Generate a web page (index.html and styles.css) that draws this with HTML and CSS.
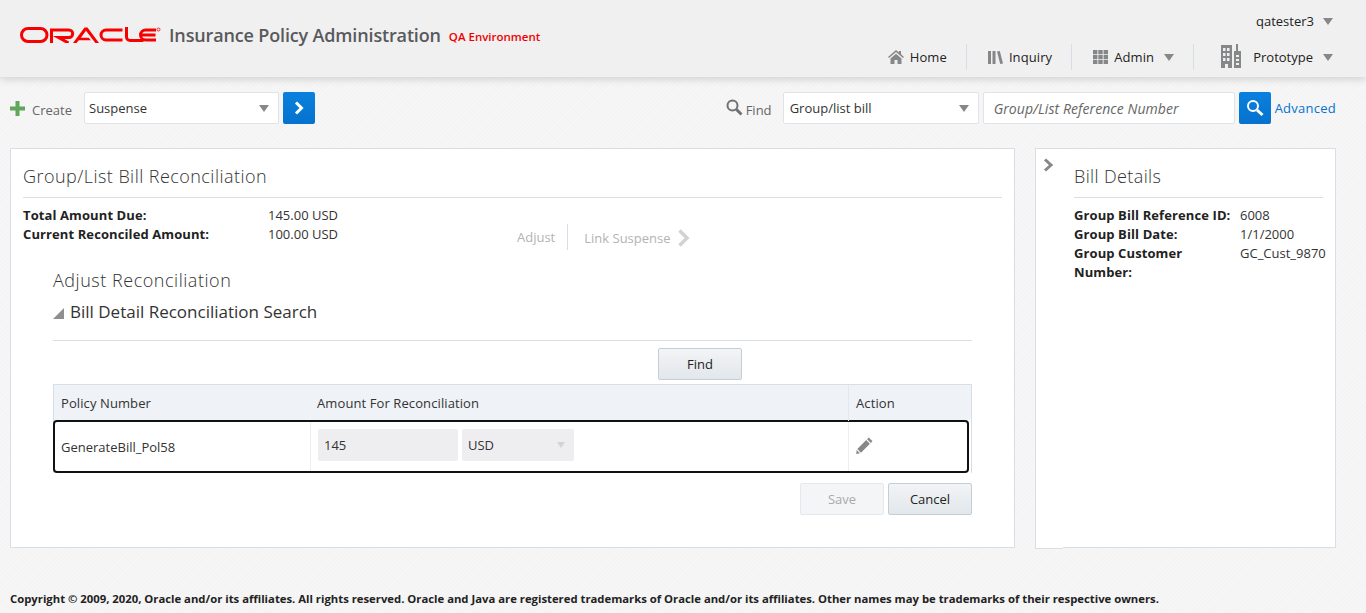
FILE: index.html
```html
<!DOCTYPE html>
<html lang="en">
<head>
<meta charset="utf-8">
<title>Insurance Policy Administration</title>
<link rel="stylesheet" href="styles.css">
</head>
<body>
<header class="topbar">
  <div class="brand">
    <svg class="logo" width="141" height="16" viewBox="0 0 141 16" aria-hidden="true">
      <g fill="none" stroke="#f80000" stroke-width="3">
        <rect x="1.500" y="1.500" width="25.500" height="13" rx="6.500"/>
        <path d="M31.500 16V3h17.500a3.700 3.700 0 0 1 0 7.400H38.500l10 5.600"/>
        <path d="M102.500 3H86a5 5 0 0 0 0 10h16.500"/>
        <path d="M106.500 0v10a3.500 3.500 0 0 0 3.500 3.500h13.500"/>
        <path d="M136 3h-10.500a5 5 0 0 0 0 10H136M121.500 8h14"/>
      </g>
      <path d="M53 16 64.500.5h3L79 16h-3.600L66 3.700 60.800 10.700h8l2 2.600H58.800L56.500 16z" fill="#f80000"/>
      <circle cx="138.500" cy="2.500" r="1.500" fill="none" stroke="#f80000" stroke-width=".8"/>
    </svg>
    <span class="product">Insurance Policy Administration</span>
    <span class="env">QA Environment</span>
  </div>
  <div class="top-right">
    <div class="user">qatester3 <i class="caret user-caret"></i></div>
    <nav class="nav">
      <a class="nav-item">
        <svg width="16" height="14" viewBox="0 0 16 14" aria-hidden="true"><path fill="#858789" d="M8 0 0 7l1 1 7-6 7 6 1-1-3-2.700V1h-2v1.500zM2.500 8.500V14h4v-4h3v4h4V8.500L8 3.700z"/></svg>
        Home
      </a>
      <a class="nav-item">
        <svg width="15" height="13" viewBox="0 0 15 13" aria-hidden="true"><path fill="#858789" d="M0 0h3v13H0zM4.500 0h3v13h-3zM9 .5l2.800-.5L15 12.500l-2.800.5z"/></svg>
        Inquiry
      </a>
      <a class="nav-item">
        <svg width="15" height="14" viewBox="0 0 15 14" aria-hidden="true"><path fill="#858789" d="M0 0h4.400v4.200H0zM5.300 0h4.400v4.200H5.300zM10.600 0H15v4.200h-4.400zM0 4.900h4.400v4.200H0zM5.300 4.900h4.400v4.200H5.300zM10.600 4.900H15v4.200h-4.400zM0 9.800h4.400V14H0zM5.300 9.800h4.400V14H5.300zM10.600 9.800H15V14h-4.400z"/></svg>
        Admin <i class="caret nav-caret"></i>
      </a>
      <a class="nav-item proto">
        <svg width="20" height="24" viewBox="0 0 20 24" aria-hidden="true"><path fill="#858789" fill-rule="evenodd" d="M0 1h11v23H7v-4H4v4H0zM2 4v3h2.500V4zM6 4v3h2.500V4zM2 9v3h2.500V9zM6 9v3h2.500V9zM2 14v3h2.500v-3zM6 14v3h2.500v-3zM13 7h2V0h2v7h3v17h-7zM15 11v2h3v-2zM15 15v2h3v-2zM15 19v2h3v-2z"/></svg>
        <span class="proto-label">Prototype</span> <i class="caret nav-caret"></i>
      </a>
    </nav>
  </div>
</header>

<section class="toolbar">
  <div class="tool-group">
    <svg class="plus" width="15" height="15" viewBox="0 0 15 15" aria-hidden="true"><path fill="#5fa85a" d="M5.500 0h4v5.500H15v4H9.500V15h-4V9.500H0v-4h5.500z"/></svg>
    <span class="tool-label create-label">Create</span>
    <div class="select create-select"><span>Suspense</span><i class="caret"></i></div>
    <button class="go" aria-label="Go">
      <svg width="12" height="14" viewBox="0 0 12 14" aria-hidden="true"><path d="M3 1.500 8.500 7 3 12.500" fill="none" stroke="#fff" stroke-width="3"/></svg>
    </button>
  </div>
  <div class="tool-group">
    <svg class="lens" width="17" height="17" viewBox="0 0 17 17" aria-hidden="true"><circle cx="6.500" cy="6.500" r="5" fill="none" stroke="#6f7173" stroke-width="2"/><path d="m10.500 10.500 5 5" stroke="#6f7173" stroke-width="3"/></svg>
    <span class="tool-label find-label">Find</span>
    <div class="select find-select"><span>Group/list bill</span><i class="caret"></i></div>
    <div class="search-input">Group/List Reference Number</div>
    <button class="go" aria-label="Search">
      <svg width="18" height="18" viewBox="0 0 18 18" aria-hidden="true"><circle cx="7" cy="7" r="5" fill="none" stroke="#fff" stroke-width="2"/><path d="m11 11 5.500 5" stroke="#fff" stroke-width="3"/></svg>
    </button>
    <a class="advanced">Advanced</a>
  </div>
</section>

<main class="content">
  <section class="panel main-panel">
    <h1 class="panel-title">Group/List Bill Reconciliation</h1>
    <div class="summary-row">
      <dl class="summary">
        <dt>Total Amount Due:</dt><dd>145.00 USD</dd>
        <dt>Current Reconciled Amount:</dt><dd>100.00 USD</dd>
      </dl>
      <div class="train">
        <span class="train-step">Adjust</span>
        <span class="train-step link-step">Link Suspense
          <svg width="13" height="18" viewBox="0 0 13 18" aria-hidden="true"><path d="M2.500 1.500 10 9l-7.500 7.500" fill="none" stroke="#d2d2d2" stroke-width="3.500"/></svg>
        </span>
      </div>
    </div>
    <div class="adjust">
      <h2 class="adjust-title">Adjust Reconciliation</h2>
      <h3 class="disclosure"><i class="tri"></i>Bill Detail Reconciliation Search</h3>
      <div class="find-row"><button class="btn">Find</button></div>
      <div class="grid">
        <div class="grid-head">
          <div class="c1">Policy Number</div>
          <div class="c2">Amount For Reconciliation</div>
          <div class="c3">Action</div>
        </div>
        <div class="grid-row">
          <div class="c1 policy">GenerateBill_Pol58</div>
          <div class="c2 cell-inputs">
            <div class="ro amount">145</div>
            <div class="ro currency">USD<i class="caret faint"></i></div>
          </div>
          <div class="c3">
            <svg width="17" height="17" viewBox="0 0 17 17" aria-hidden="true"><path fill="#858789" d="M12.800.5 16.500 4.200 14.800 5.900 11.100 2.200zM10.200 3.100 13.900 6.800 5 15.700 1.300 12zM.7 13l3.300 3.300-3.800.6z"/></svg>
          </div>
        </div>
      </div>
      <div class="actions">
        <button class="btn disabled">Save</button>
        <button class="btn">Cancel</button>
      </div>
    </div>
  </section>
  <aside class="panel side-panel">
    <svg class="collapse" width="12" height="16" viewBox="0 0 12 16" aria-hidden="true"><path d="M2 2.500 8 8l-6 5.500" fill="none" stroke="#858789" stroke-width="3"/></svg>
    <div class="side-body">
      <h1 class="panel-title">Bill Details</h1>
      <dl class="details">
        <dt>Group Bill Reference ID:</dt><dd>6008</dd>
        <dt>Group Bill Date:</dt><dd>1/1/2000</dd>
        <dt>Group Customer Number:</dt><dd>GC_Cust_9870</dd>
      </dl>
    </div>
  </aside>
</main>

<footer class="footer">Copyright © 2009, 2020, Oracle and/or its affiliates. All rights reserved. Oracle and Java are registered trademarks of Oracle and/or its affiliates. Other names may be trademarks of their respective owners.</footer>
</body>
</html>
```
FILE: styles.css
```css
* { box-sizing: border-box; }
html, body { height: 100%; }
body {
  margin: 0;
  height: 613px;
  overflow: hidden;
  font-family: "Open Sans", "Noto Sans", sans-serif;
  font-size: 13px;
  color: #333;
  background-color: #f6f6f6;
  background-image: repeating-linear-gradient(135deg, #f7f7f7 0 1px, #f4f4f4 1px 3px);
}
h1, h2, h3, dl, dd { margin: 0; font-weight: 400; }

.topbar {
  height: 77px;
  background: #f0f0f0;
  box-shadow: 0 2px 8px rgba(0,0,0,.16);
  display: flex;
  justify-content: space-between;
  position: relative;
}
.brand { display: flex; align-items: center; padding: 0 0 0 20px; height: 69px; }
.logo { margin-top: 1px; }
.product { margin-left: 8px; font-size: 18px; font-weight: 600; color: #58595d; white-space: nowrap; letter-spacing: -.15px; }
.env { margin-left: 8px; margin-top: 3px; font-size: 11.500px; font-weight: 600; color: #e00; white-space: nowrap; }

.top-right { display: flex; flex-direction: column; align-items: flex-end; padding-right: 33px; }
.user { margin-top: 11px; height: 20px; font-size: 13px; display: flex; align-items: center; gap: 9px; color: #222; }
.nav { display: flex; align-items: center; margin-top: 13px; height: 26px; }
.nav-item { display: flex; align-items: center; gap: 6px; height: 26px; padding: 0 19px 0 21px; border-right: 1px solid #d6dfe6; color: #222; font-size: 13px; white-space: nowrap; letter-spacing: .1px; }
.nav-item:last-child { border-right: 0; padding-right: 0; padding-left: 27px; letter-spacing: 0; }
.proto svg { margin-top: -2px; }
.proto-label { margin-left: 6px; }
.caret { display: inline-block; width: 0; height: 0; border-left: 5px solid transparent; border-right: 5px solid transparent; border-top: 7px solid #858789; }
.nav-caret { margin-left: 4px; }
.faint { border-top-color: #d4d4d4; border-left-width: 4px; border-right-width: 4px; border-top-width: 6px; }

.toolbar { height: 71px; padding: 15px 30px 0 10px; display: flex; justify-content: space-between; align-items: flex-start; }
.tool-group { display: flex; align-items: center; height: 32px; }
.tool-label { color: #666; font-size: 13px; margin-top: 4px; }
.create-label { margin-left: 7px; width: 52px; }
.find-label { margin-left: 3px; width: 37px; }
.lens { margin-top: -2px; }
.select, .search-input { height: 32px; background: #fff; border: 1px solid #dfe4ea; border-radius: 2px; display: flex; align-items: center; justify-content: space-between; padding: 0 9px 0 4px; }
.create-select { width: 195px; }
.find-select { width: 196px; padding-left: 6px; }
.search-input { width: 252px; margin-left: 4px; padding-left: 10px; font-size: 14px; font-style: italic; color: #666; letter-spacing: .07px; }
.go { width: 32px; height: 32px; margin-left: 4px; padding: 0; border: 0; border-radius: 2px; background: linear-gradient(#0a80de, #0572ce); display: flex; align-items: center; justify-content: center; }
.advanced { margin-left: 4px; color: #0572ce; letter-spacing: .25px; }

.content { display: flex; align-items: flex-start; gap: 20px; padding-left: 10px; }
.panel { background: #fff; border: 1px solid #d6dfe6; height: 400px; }
.main-panel { width: 1005px; padding: 0 12px; }
.side-panel { width: 301px; display: flex; position: relative; }
.side-panel::after { content: ""; position: absolute; left: -1px; bottom: -2px; width: 27px; height: 2px; background: #fff; border: 1px solid #d6dfe6; border-width: 0 0 1px 1px; }
.panel-title { font-size: 18px; font-weight: 300; line-height: 24px; color: #333; padding: 15px 0 8px; border-bottom: 1px solid #d6dfe6; height: 49px; letter-spacing: .45px; }
.side-body .panel-title { letter-spacing: .37px; }

.summary-row { display: flex; height: 60px; }
.summary { width: 494px; padding-top: 8px; display: grid; grid-template-columns: 245px 1fr; grid-auto-rows: 19px; line-height: 19px; align-content: start; }
.summary dt, .details dt { font-weight: 700; color: #222; letter-spacing: .1px; }
.train { display: flex; align-items: center; margin-top: 26px; height: 26px; color: #b3b3b3; }
.train-step { padding-right: 12px; }
.train-step:first-child { border-right: 1px solid #d6dfe6; height: 26px; line-height: 26px; }
.link-step { display: flex; align-items: center; gap: 6px; padding-left: 16px; margin-top: 2px; }

.adjust { padding: 0 30px; }
.adjust-title { font-size: 18px; font-weight: 300; line-height: 24px; margin-top: 10px; letter-spacing: .53px; }
.disclosure { font-size: 17px; line-height: 24px; margin-top: 8px; display: flex; align-items: center; height: 24px; color: #333; }
.tri { width: 0; height: 0; border-left: 11px solid transparent; border-bottom: 11px solid #8f8f8f; margin-right: 6px; margin-top: 3px; }
.find-row { border-top: 1px solid #d6dfe6; margin-top: 16px; padding: 7px 230px 0 0; display: flex; justify-content: flex-end; height: 44px; }
.btn { height: 32px; width: 84px; padding: 0; font: inherit; color: #222; background: linear-gradient(#f2f4f6, #e2e7eb); border: 1px solid #c4ced7; border-radius: 2px; }
.btn.disabled { color: #aaa; background: #f3f5f6; border-color: #e4e9ed; }

.grid { border: 1px solid #d6dfe6; border-bottom: 0; }
.grid-head, .grid-row { display: grid; grid-template-columns: 256px 538px 1fr; }
.grid-head { background: #eff2f7; height: 35px; line-height: 36px; letter-spacing: .1px; }
.grid-head > div { padding-left: 7px; }
.grid-head .c3 { border-left: 1px solid #e4e8ec; }
.grid-row { height: 53px; border: 2px solid #111; border-radius: 4px; margin: 0 2px 0 -1px; align-items: stretch; }
.policy { padding: 0 0 0 6px; display: flex; align-items: center; border-right: 1px solid #eceff2; }
.cell-inputs { display: flex; gap: 4px; padding: 7px 0 0 7px; border-right: 1px solid #eceff2; }
.ro { height: 32px; background: #eeeef0; border-radius: 2px; display: flex; align-items: center; padding: 0 6px; }
.amount { width: 140px; }
.currency { width: 112px; justify-content: space-between; padding-right: 9px; }
.c3 svg { display: block; margin: 15px 0 0 7px; }
.actions { display: flex; justify-content: flex-end; gap: 4px; margin-top: 10px; }

.collapse { margin: 8px 0 0 7px; flex: none; }
.side-body { margin-left: 19px; width: 249px; }
.details { display: grid; grid-template-columns: 166px 100px; line-height: 19px; padding-top: 8px; }
.details dd { white-space: nowrap; }

.footer { position: absolute; left: 10px; top: 591px; font-size: 11.300px; font-weight: 700; color: #222; white-space: nowrap; line-height: 16px; }
```
